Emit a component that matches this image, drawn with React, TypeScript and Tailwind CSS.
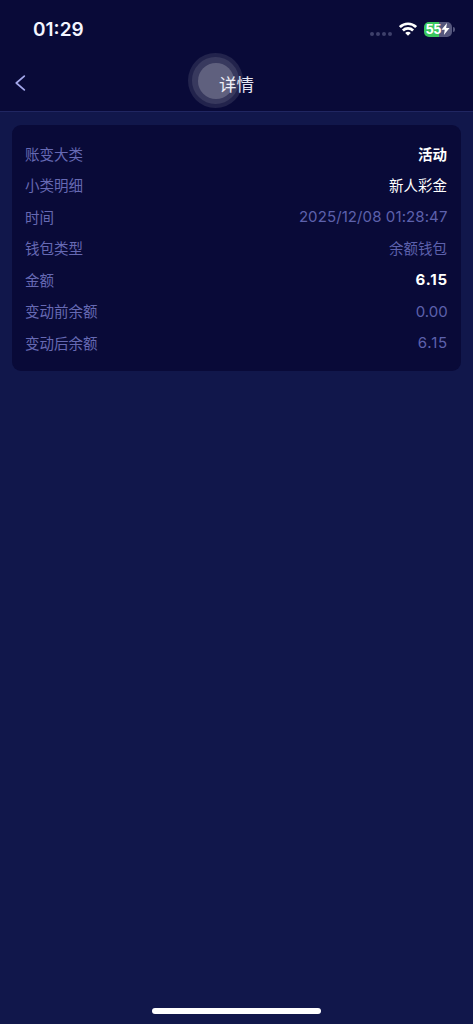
const rows = [
  { label: "账变大类", value: "活动", style: "pt-[2px] font-bold text-white text-[14.5px]" },
  { label: "小类明细", value: "新人彩金", style: "pt-[2px] text-white text-[14.5px]" },
  {
    label: "时间",
    value: "2025/12/08 01:28:47",
    style: "text-[#5d61ac] text-[15px] tracking-[0.1px] -mr-[0.5px]",
  },
  { label: "钱包类型", value: "余额钱包", style: "pt-[2px] text-[#5d61ac] text-[14.5px]" },
  { label: "金额", value: "6.15", style: "font-bold text-white text-[15px] tracking-[0.8px] -mr-[0.8px]" },
  { label: "变动前余额", value: "0.00", style: "text-[#5d61ac] text-[15px] -mr-[0.6px]" },
  { label: "变动后余额", value: "6.15", style: "text-[#5d61ac] text-[15px] tracking-[0.8px] -mr-[1px]" },
];

const StatusBar = () => {
  return (
    <div className="flex h-[58px] items-center justify-between pl-[33px] pr-[18px]">
      <span className="text-[19px] font-semibold leading-none text-[#f4f5ff]">
        01:29
      </span>
      <div className="flex items-center">
        <div className="mt-[9px] flex gap-[2px]">
          <span className="size-1 rounded-full bg-[#3e406b]" />
          <span className="size-1 rounded-full bg-[#3e406b]" />
          <span className="size-1 rounded-full bg-[#3e406b]" />
          <span className="size-1 rounded-full bg-[#3e406b]" />
        </div>
        <svg
          className="ml-[7px] h-[14px] w-[18px]"
          viewBox="0 0 18 14"
          fill="none"
          stroke="#fff"
          strokeWidth="2.7"
        >
          <path d="M.9 5.1C5.4.6 12.6.6 17.1 5.1" />
          <path d="M3.9 8.5c2.8-2.8 7.4-2.8 10.2 0" />
          <path d="M6.2 10.9c1.6-1.6 4-1.6 5.6 0L9 13.8z" fill="#fff" stroke="none" />
        </svg>
        <div className="ml-[7px] flex h-[15px] w-[28px] items-center justify-center rounded-[5px] bg-linear-to-r from-[#3ac75e] from-55% to-[#55577d] to-55%">
          <span className="font-['Liberation_Sans',sans-serif] text-[14px] font-bold leading-none text-white">
            55
          </span>
          <svg className="h-[12px] w-[9px]" viewBox="0 0 8 11" fill="#fff">
            <path d="M5.4 0 .3 6.2h3L2.5 11l5.2-6.5H4.6z" />
          </svg>
        </div>
        <span className="ml-px h-[5px] w-[2px] rounded-r-full bg-[#55577d]" />
      </div>
    </div>
  );
};

const App = () => {
  return (
    <main className="flex h-screen flex-col bg-[#11174b] font-[Inter,'Noto_Sans_CJK_SC',sans-serif]">
      <header className="h-[111px] bg-[#090a38]">
        <StatusBar />
        <div className="relative flex h-[50px] items-center justify-center">
          <svg
            className="absolute left-[15px] top-[17px] h-4 w-[11px]"
            viewBox="0 0 11 16"
            fill="none"
            stroke="#a5a9ed"
            strokeWidth="1.7"
            strokeLinecap="round"
            strokeLinejoin="round"
          >
            <path d="M9.3 1.1 1.3 8l8 6.9" />
          </svg>
          <h1 className="pt-[3px] text-[17.5px] leading-none text-[#e5e6f4]">详情</h1>
          {/* assistive touch button floating over the title */}
          <div className="absolute left-[188px] top-[-5px] flex size-[55px] items-center justify-center rounded-full bg-white/10">
            <div className="flex size-[47px] items-center justify-center rounded-full bg-white/10">
              <div className="size-[36px] rounded-full bg-white/20" />
            </div>
          </div>
        </div>
      </header>
      <div className="h-px bg-[#202661]" />
      <section className="mx-3 mt-[13px] h-[246px] rounded-[9px] bg-[#090a38] pl-[13px] pr-[14px] pt-[13px]">
        {rows.map((row) => (
          <div
            key={row.label}
            className="flex h-[31.5px] items-center justify-between leading-none"
          >
            <span className="pt-[2px] text-[14.5px] text-[#6669b3]">{row.label}</span>
            <span className={row.style}>{row.value}</span>
          </div>
        ))}
      </section>
      <div className="mx-auto mb-[10px] mt-auto h-[6px] w-[169px] rounded-full bg-white" />
    </main>
  );
};

export default App;
